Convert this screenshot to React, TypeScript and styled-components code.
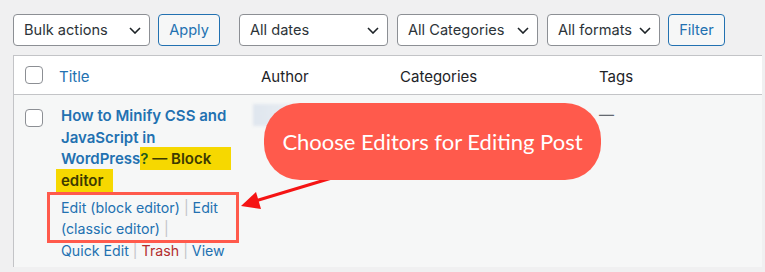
import React from 'react';
import styled, { createGlobalStyle } from 'styled-components';

const GlobalStyle = createGlobalStyle`
	html, body {
		margin: 0;
		padding: 0;
		background: #f0f0f1;
	}
	body {
		font-family: Inter, 'Liberation Sans', sans-serif;
		color: #1d2327;
		-webkit-font-smoothing: antialiased;
	}
`;

const Page = styled.div`
	position: relative;
	width: 765px;
	height: 272px;
	padding: 14px 0 0 13px;
	box-sizing: border-box;
	overflow: hidden;
`;

const Toolbar = styled.div`
	display: flex;
	align-items: center;
	height: 32px;
`;

const Select = styled.div<{ $w: number; $gap?: number }>`
	display: flex;
	align-items: center;
	justify-content: space-between;
	box-sizing: border-box;
	width: ${(p) => p.$w}px;
	height: 32px;
	margin-right: ${(p) => p.$gap ?? 9}px;
	padding: 0 8px 0 10px;
	border: 1px solid #8c8f94;
	border-radius: 4px;
	background: #fff;
	font-size: 14.6px;
	color: #2c3338;
	white-space: nowrap;
`;

const Button = styled.div<{ $w: number; $gap?: number }>`
	display: flex;
	align-items: center;
	justify-content: center;
	box-sizing: border-box;
	width: ${(p) => p.$w}px;
	height: 32px;
	margin-right: ${(p) => p.$gap ?? 0}px;
	border: 1px solid #2271b1;
	border-radius: 4px;
	background: #f6f7f7;
	color: #2271b1;
	font-size: 14.6px;
`;

const Table = styled.div`
	width: 748px;
	margin-top: 9px;
	border-left: 1px solid #c3c4c7;
	border-top: 1px solid #c3c4c7;
`;

const Row = styled.div<{ $head?: boolean }>`
	display: grid;
	grid-template-columns: 37px 202px 139px 199px 1fr;
	background: ${(p) => (p.$head ? '#fff' : '#f6f7f7')};
	height: ${(p) => (p.$head ? 38 : 172)}px;
	border-bottom: ${(p) => (p.$head ? '1px solid #c3c4c7' : 'none')};
	align-items: ${(p) => (p.$head ? 'center' : 'start')};
`;

const HeadCell = styled.div<{ $link?: boolean }>`
	padding: 2px 0 0 8px;
	font-size: 15px;
	color: ${(p) => (p.$link ? '#2271b1' : '#1d2327')};
`;

const CheckCell = styled.div<{ $top?: number }>`
	padding: ${(p) => p.$top ?? 0}px 0 0 11px;
`;

const Checkbox = styled.div`
	width: 18px;
	height: 18px;
	box-sizing: border-box;
	border: 1px solid #8c8f94;
	border-radius: 4px;
	background: #fff;
`;

const TitleCell = styled.div`
	padding: 10px 0 0 10px;
`;

const PostTitle = styled.div`
	font-size: 15px;
	font-weight: 600;
	line-height: 21.7px;
	color: #2271b1;
	white-space: nowrap;
`;

const Mark = styled.span<{ $tone: string; $pl?: number; $pr?: number }>`
	background: #f6d800;
	color: ${(p) => p.$tone};
	padding: 2px ${(p) => p.$pr ?? 0}px 2px ${(p) => p.$pl ?? 0}px;
	margin-left: ${(p) => -(p.$pl ?? 0)}px;
`;

const Actions = styled.div`
	margin-top: 5px;
	font-size: 14.2px;
	line-height: 21.5px;
	white-space: nowrap;
	color: #2271b1;
`;

const Action = styled.span<{ $danger?: boolean }>`
	color: ${(p) => (p.$danger ? '#b32d2e' : '#2271b1')};
`;

const Sep = styled.span`
	color: #c3c4c7;
	margin: 0 4px;
`;

const AuthorCell = styled.div`
	padding-top: 9px;
`;

const BlurredName = styled.div`
	width: 40px;
	height: 22px;
	background: linear-gradient(90deg, #dfe6ee, #e8edf2);
	filter: blur(1.5px);
`;

const TagsCell = styled.div`
	padding: 9px 0 0 8px;
	font-size: 15px;
	color: #646970;
	line-height: 21.6px;
`;

const Callout = styled.div`
	position: absolute;
	left: 264px;
	top: 103px;
	width: 337px;
	height: 77px;
	border-radius: 36px;
	background: #ff5a4c;
	display: flex;
	align-items: center;
	justify-content: center;
	color: #fff;
	font-family: Lato, 'Open Sans', sans-serif;
	font-size: 22px;
	z-index: 2;
`;

const FocusBox = styled.div`
	position: absolute;
	left: 47px;
	top: 192px;
	width: 192px;
	height: 51px;
	box-sizing: border-box;
	border: 3px solid #ff5a4c;
`;

const ArrowSvg = styled.svg`
	position: absolute;
	left: 0;
	top: 0;
	z-index: 1;
	pointer-events: none;
`;

const Chevron = () => (
	<svg width='12' height='7' viewBox='0 0 12 7'>
		<path d='M1 1l5 5 5-5' fill='none' stroke='#1d2327' strokeWidth='1.6' />
	</svg>
);

export default function App() {
	return (
		<>
			<GlobalStyle />
			<Page>
				<Toolbar>
					<Select $w={137} $gap={8}>
						Bulk actions <Chevron />
					</Select>
					<Button $w={62} $gap={19}>
						Apply
					</Button>
					<Select $w={149}>
						All dates <Chevron />
					</Select>
					<Select $w={141}>
						All Categories <Chevron />
					</Select>
					<Select $w={113} $gap={8}>
						All formats <Chevron />
					</Select>
					<Button $w={57}>Filter</Button>
				</Toolbar>
				<Table>
					<Row $head>
						<CheckCell>
							<Checkbox />
						</CheckCell>
						<HeadCell $link>Title</HeadCell>
						<HeadCell>Author</HeadCell>
						<HeadCell>Categories</HeadCell>
						<HeadCell>Tags</HeadCell>
					</Row>
					<Row>
						<CheckCell $top={14}>
							<Checkbox />
						</CheckCell>
						<TitleCell>
							<PostTitle>
								How to Minify CSS and
								<br />
								JavaScript in
								<br />
								WordPress
								<Mark $tone='#1f5a1e'>?</Mark>
								<Mark $tone='#3d3a00' $pr={20}>
									{' '}— Block
								</Mark>
								<br />
								<Mark $tone='#3d3a00' $pl={5} $pr={10}>
									editor
								</Mark>
							</PostTitle>
							<Actions>
								<Action>Edit (block editor)</Action>
								<Sep>|</Sep>
								<Action>Edit</Action>
								<br />
								<Action>(classic editor)</Action>
								<Sep>|</Sep>
								<br />
								<Action>Quick Edit</Action>
								<Sep>|</Sep>
								<Action $danger>Trash</Action>
								<Sep>|</Sep>
								<Action>View</Action>
							</Actions>
						</TitleCell>
						<AuthorCell>
							<BlurredName />
						</AuthorCell>
						<div />
						<TagsCell>—</TagsCell>
					</Row>
				</Table>
				<ArrowSvg width='765' height='272'>
					<line x1='345' y1='174' x2='252' y2='202' stroke='#f51414' strokeWidth='3.2' />
					<polygon points='241,206 256,192 261,209' fill='#f51414' />
				</ArrowSvg>
				<FocusBox />
				<Callout>Choose Editors for Editing Post</Callout>
			</Page>
		</>
	);
}
